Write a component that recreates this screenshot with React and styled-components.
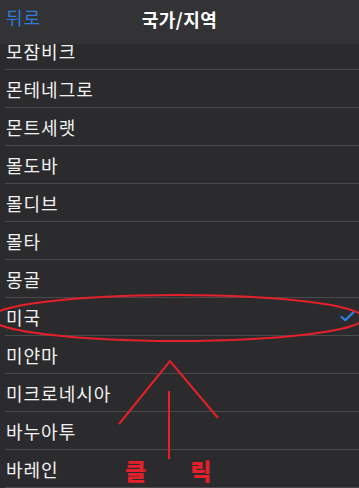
import styled, { createGlobalStyle } from 'styled-components'

const countries = ['모잠비크', '몬테네그로', '몬트세랫', '몰도바', '몰디브', '몰타', '몽골', '미국', '미얀마', '미크로네시아', '바누아투', '바레인']
const selected = '미국'

export default function App () {
    return (
        <Screen>
            <GlobalStyle />
            <Header>
                <Back>뒤로</Back>
                <Title>국가/지역</Title>
            </Header>
            <List>
                {countries.map((name) => (
                    <Row key={name}>
                        <Name>{name}</Name>
                        {name === selected && (
                            <Check viewBox="0 0 16 12">
                                <path d="M1.5 6.5 L5.5 10 L14.5 1.5" fill="none" stroke="#2f7fe0" strokeWidth="2.4" strokeLinecap="round" strokeLinejoin="round" />
                            </Check>
                        )}
                    </Row>
                ))}
            </List>
            <Marks viewBox="0 0 359 488">
                <ellipse cx="177" cy="318" rx="186" ry="23" fill="none" stroke="#e5202a" strokeWidth="2" />
                <polyline points="119,424 170,361 218,418" fill="none" stroke="#e5202a" strokeWidth="2" />
                <line x1="169" y1="391" x2="169" y2="459" stroke="#e5202a" strokeWidth="2" />
            </Marks>
            <Click>클<span>릭</span></Click>
        </Screen>
    )
}

const GlobalStyle = createGlobalStyle`
    * { box-sizing: border-box; }
    body {
        margin: 0;
        background-color: #2b2b2d;
        font-family: "Noto Sans CJK KR", "Noto Sans", sans-serif;
    }
`

const Screen = styled.div`
    position: relative;
    width: 359px;
    height: 488px;
    overflow: hidden;
    background-color: #2b2b2d;
`

const Header = styled.div`
    position: relative;
    z-index: 2;
    height: 44px;
    display: flex;
    align-items: center;
    justify-content: center;
    background-color: #333335;
`

const Back = styled.div`
    position: absolute;
    left: 6px;
    top: 4px;
    font-size: 18px;
    color: #2f7ad8;
    letter-spacing: 1px;
`

const Title = styled.div`
    margin-top: -7px;
    font-size: 18px;
    font-weight: 700;
    color: #ffffff;
    letter-spacing: 0.5px;
`

const List = styled.div`
    margin-top: -12px;
    padding-left: 5px;
`

const Row = styled.div`
    height: 38px;
    display: flex;
    align-items: center;
    justify-content: space-between;
    padding: 0 4px 0 1px;
    border-bottom: 1px solid #4a4a4c;
`

const Name = styled.span`
    font-size: 18px;
    color: #f2f2f2;
    letter-spacing: 1px;
`

const Check = styled.svg`
    width: 15px;
    height: 11px;
`

const Marks = styled.svg`
    position: absolute;
    left: 0;
    top: 0;
    width: 359px;
    height: 488px;
    z-index: 3;
    pointer-events: none;
`

const Click = styled.div`
    position: absolute;
    z-index: 3;
    left: 125px;
    top: 459px;
    font-size: 23px;
    line-height: 1;
    font-weight: 900;
    color: #e5202a;

    span {
        margin-left: 44px;
    }
`
